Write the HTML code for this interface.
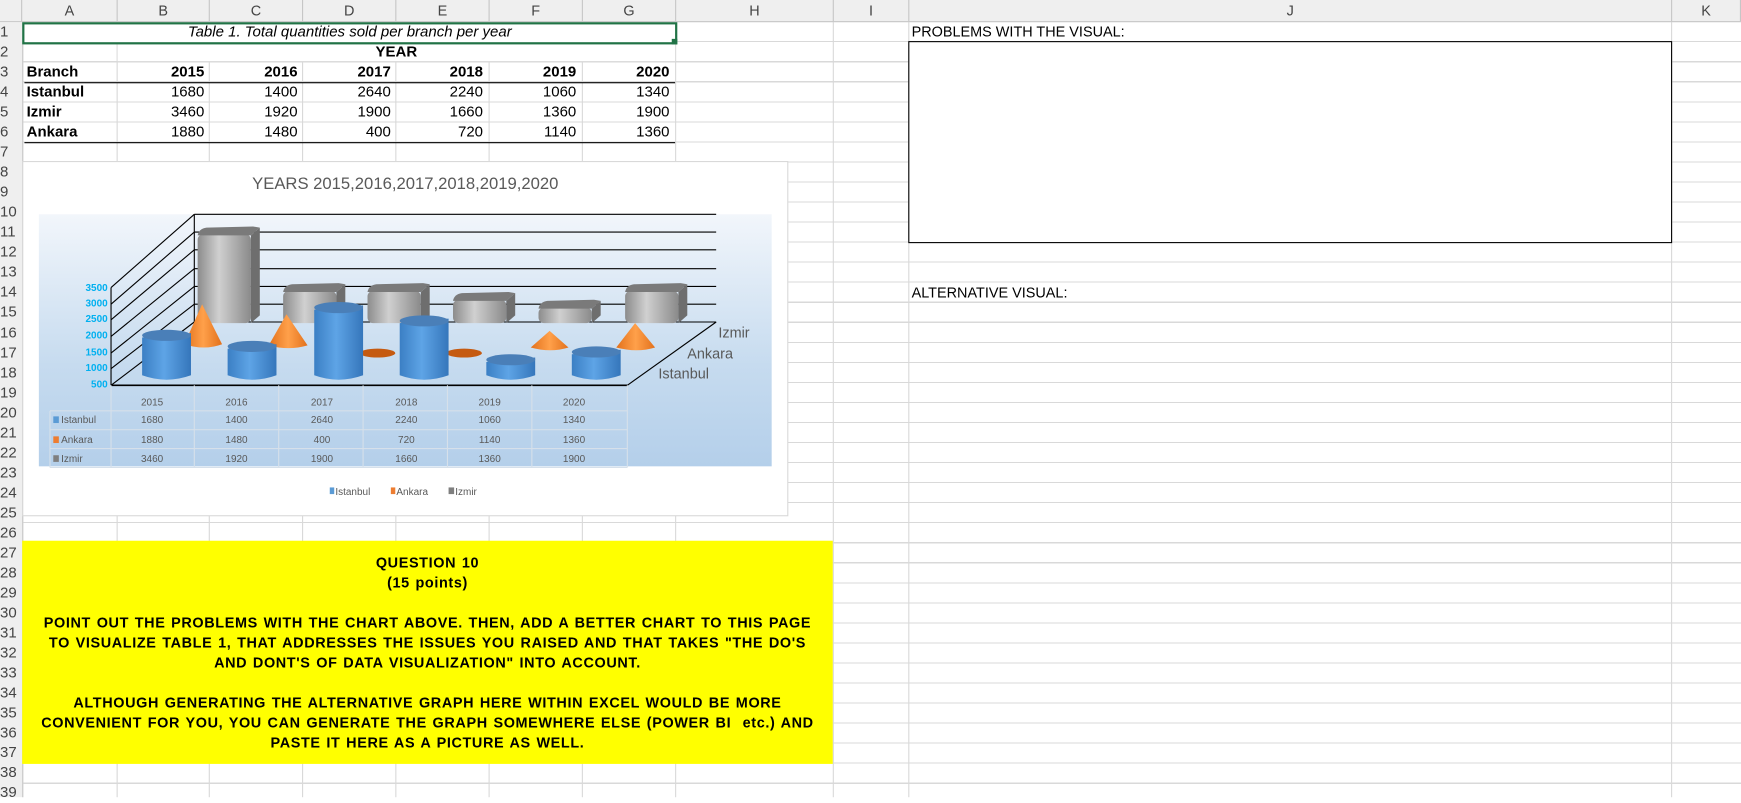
<!DOCTYPE html>
<html><head><meta charset="utf-8">
<style>
html,body{margin:0;padding:0;background:#fff;overflow:hidden;width:1741px;height:797px}
#w{position:absolute;left:0;top:0;width:1568px;height:718px;transform:scale(1.11033);transform-origin:0 0;font-family:"Liberation Sans",Arial,sans-serif;color:#000}
.a{position:absolute}
#grid{position:absolute;left:20px;top:20px;width:1548px;height:698px;
background-image:repeating-linear-gradient(to bottom,transparent 0,transparent 17.05px,#d9d9d9 17.05px,#d9d9d9 18.05px)}
.vl{position:absolute;top:0;width:1px;height:718px;background:#d9d9d9}
#hdr{position:absolute;left:0;top:0;width:1568px;height:19px;background:#efefef;border-bottom:1px solid #c6c6c6}
.ch{position:absolute;top:0;height:19px;line-height:19px;text-align:center;font-size:13px;color:#444;border-right:1px solid #c6c6c6;box-sizing:border-box}
#rn{position:absolute;left:0;top:20px;width:20px;height:698px;background:#efefef;border-right:1px solid #c6c6c6}
.r{position:absolute;left:0;width:18px;font-size:13.5px;color:#444;height:18px;line-height:18px}
.c{position:absolute;font-size:13.5px;height:18px;line-height:18px}
.num{text-align:right;width:80px}
.b{font-weight:bold}
#yel{position:absolute;left:20px;top:487px;width:730px;height:201px;background:#ffff00;text-align:center;font-weight:bold;font-size:13px;line-height:18px;letter-spacing:0.55px;word-spacing:1px;white-space:nowrap}
</style></head><body><div id="w">
<div id="grid"></div>
<div class="vl" style="left:105px"></div><div class="vl" style="left:188px"></div><div class="vl" style="left:272px"></div><div class="vl" style="left:356px"></div><div class="vl" style="left:440px"></div><div class="vl" style="left:524px"></div><div class="vl" style="left:608px"></div><div class="vl" style="left:750px"></div><div class="vl" style="left:818px"></div><div class="vl" style="left:1505px"></div>
<div id="hdr">
<div class="ch" style="left:0;width:20px;background:#efefef"></div>
<div class="ch" style="left:20px;width:86px">A</div><div class="ch" style="left:106px;width:83px">B</div><div class="ch" style="left:189px;width:84px">C</div><div class="ch" style="left:273px;width:84px">D</div><div class="ch" style="left:357px;width:84px">E</div><div class="ch" style="left:441px;width:84px">F</div><div class="ch" style="left:525px;width:84px">G</div><div class="ch" style="left:609px;width:142px">H</div><div class="ch" style="left:751px;width:68px">I</div><div class="ch" style="left:819px;width:687px">J</div><div class="ch" style="left:1506px;width:62px">K</div>
</div>
<div id="rn">
<div class="r" style="top:0">1</div><div class="r" style="top:18px">2</div><div class="r" style="top:36px">3</div><div class="r" style="top:54px">4</div><div class="r" style="top:72px">5</div><div class="r" style="top:90px">6</div><div class="r" style="top:108px">7</div><div class="r" style="top:126px">8</div><div class="r" style="top:144px">9</div><div class="r" style="top:162px">10</div><div class="r" style="top:180px">11</div><div class="r" style="top:198px">12</div><div class="r" style="top:216px">13</div><div class="r" style="top:234px">14</div><div class="r" style="top:252px">15</div><div class="r" style="top:271px">16</div><div class="r" style="top:289px">17</div><div class="r" style="top:307px">18</div><div class="r" style="top:325px">19</div><div class="r" style="top:343px">20</div><div class="r" style="top:361px">21</div><div class="r" style="top:379px">22</div><div class="r" style="top:397px">23</div><div class="r" style="top:415px">24</div><div class="r" style="top:433px">25</div><div class="r" style="top:451px">26</div><div class="r" style="top:469px">27</div><div class="r" style="top:487px">28</div><div class="r" style="top:505px">29</div><div class="r" style="top:523px">30</div><div class="r" style="top:541px">31</div><div class="r" style="top:559px">32</div><div class="r" style="top:577px">33</div><div class="r" style="top:595px">34</div><div class="r" style="top:613px">35</div><div class="r" style="top:631px">36</div><div class="r" style="top:649px">37</div><div class="r" style="top:667px">38</div><div class="r" style="top:685px">39</div>
</div>
<div class="a" style="left:106px;top:39px;width:502px;height:16px;background:#fff"></div>
<div class="a" style="left:20px;top:20px;width:586px;height:16px;border:2px solid #217346;background:#fff"></div>
<div class="a" style="left:605px;top:35px;width:5px;height:5px;background:#217346"></div>
<div class="c" style="left:20px;top:20px;width:590px;text-align:center;font-style:italic">Table 1. Total quantities sold per branch per year</div>
<div class="c b" style="left:106px;top:38px;width:502px;text-align:center">YEAR</div>
<div class="a" style="left:22px;top:74px;width:586px;height:1px;background:#000"></div>
<div class="a" style="left:22px;top:128px;width:586px;height:1px;background:#000"></div>
<div class="c b" style="left:24px;top:56px">Branch</div>
<div class="c b" style="left:24px;top:74px">Istanbul</div>
<div class="c b" style="left:24px;top:92px">Izmir</div>
<div class="c b" style="left:24px;top:110px">Ankara</div>
<div class="c b num" style="left:104px;top:56px">2015</div><div class="c b num" style="left:188px;top:56px">2016</div><div class="c b num" style="left:272px;top:56px">2017</div><div class="c b num" style="left:355px;top:56px">2018</div><div class="c b num" style="left:439px;top:56px">2019</div><div class="c b num" style="left:523px;top:56px">2020</div>
<div class="c num" style="left:104px;top:74px">1680</div><div class="c num" style="left:188px;top:74px">1400</div><div class="c num" style="left:272px;top:74px">2640</div><div class="c num" style="left:355px;top:74px">2240</div><div class="c num" style="left:439px;top:74px">1060</div><div class="c num" style="left:523px;top:74px">1340</div>
<div class="c num" style="left:104px;top:92px">3460</div><div class="c num" style="left:188px;top:92px">1920</div><div class="c num" style="left:272px;top:92px">1900</div><div class="c num" style="left:355px;top:92px">1660</div><div class="c num" style="left:439px;top:92px">1360</div><div class="c num" style="left:523px;top:92px">1900</div>
<div class="c num" style="left:104px;top:110px">1880</div><div class="c num" style="left:188px;top:110px">1480</div><div class="c num" style="left:272px;top:110px">400</div><div class="c num" style="left:355px;top:110px">720</div><div class="c num" style="left:439px;top:110px">1140</div><div class="c num" style="left:523px;top:110px">1360</div>
<div class="c" style="left:821px;top:20px;font-size:13px">PROBLEMS WITH THE VISUAL:</div>
<div class="a" style="left:818px;top:37px;width:686px;height:180px;border:1px solid #000;background:#fff"></div>
<div class="c" style="left:821px;top:255px;font-size:13px">ALTERNATIVE VISUAL:</div>
<svg class="a" style="left:20px;top:145px" width="691" height="321" viewBox="20 145 691 321" font-family="Liberation Sans, sans-serif">
<defs>
<linearGradient id="bg" x1="0" y1="0" x2="0" y2="1"><stop offset="0" stop-color="#f2f6fb"/><stop offset="0.6" stop-color="#c6dbef"/><stop offset="1" stop-color="#b4cfea"/></linearGradient>
<linearGradient id="gy" x1="0" y1="0" x2="1" y2="0"><stop offset="0" stop-color="#8c8c8c"/><stop offset="0.4" stop-color="#d0d0d0"/><stop offset="1" stop-color="#8a8a8a"/></linearGradient>
<linearGradient id="bl" x1="0" y1="0" x2="1" y2="0"><stop offset="0" stop-color="#3b7fc4"/><stop offset="0.45" stop-color="#5ea4e6"/><stop offset="1" stop-color="#3576bb"/></linearGradient>
<linearGradient id="or" x1="0" y1="0" x2="1" y2="0"><stop offset="0" stop-color="#e2711c"/><stop offset="0.5" stop-color="#ffa04a"/><stop offset="1" stop-color="#e2711c"/></linearGradient>
</defs>
<rect x="20.5" y="145.5" width="689" height="319" fill="#fff" stroke="#d9d9d9"/>
<text x="365" y="170" text-anchor="middle" font-size="15" fill="#595959">YEARS 2015,2016,2017,2018,2019,2020</text>
<rect x="35" y="193" width="660" height="227" fill="url(#bg)"/>
<g stroke="#000" stroke-width="1" fill="none">
<line x1="175" y1="193" x2="645" y2="193"/><line x1="175" y1="209" x2="645" y2="209"/><line x1="175" y1="225" x2="645" y2="225"/><line x1="175" y1="242" x2="645" y2="242"/><line x1="175" y1="258" x2="645" y2="258"/><line x1="175" y1="274" x2="645" y2="274"/><line x1="175" y1="290" x2="645" y2="290"/>
<line x1="100" y1="259" x2="175" y2="193"/><line x1="100" y1="274" x2="175" y2="209"/><line x1="100" y1="288" x2="175" y2="225"/><line x1="100" y1="303" x2="175" y2="242"/><line x1="100" y1="318" x2="175" y2="258"/><line x1="100" y1="332" x2="175" y2="274"/><line x1="100" y1="347" x2="175" y2="290"/>
<line x1="100" y1="259" x2="100" y2="347"/><line x1="175" y1="193" x2="175" y2="290"/>
<line x1="100" y1="347" x2="565" y2="347" stroke-width="1.5"/><line x1="565" y1="347" x2="645" y2="290"/>
</g>
<g stroke="none">
<g><rect x="178" y="211" width="48" height="80" rx="5" fill="url(#gy)"/><path d="M226 212 L234 205 L234 284 L226 291Z" fill="#6e6e6e"/><path d="M178 212 Q179 206 186 205 L228 204 L234 205 L226 212Z" fill="#7a7a7a"/></g>
<g><rect x="255" y="262" width="48" height="29" rx="5" fill="url(#gy)"/><path d="M303 263 L311 256 L311 284 L303 291Z" fill="#6e6e6e"/><path d="M255 263 Q256 257 263 256 L305 255 L311 256 L303 263Z" fill="#7a7a7a"/></g>
<g><rect x="331" y="262" width="48" height="29" rx="5" fill="url(#gy)"/><path d="M379 263 L387 256 L387 284 L379 291Z" fill="#6e6e6e"/><path d="M331 263 Q332 257 339 256 L381 255 L387 256 L379 263Z" fill="#7a7a7a"/></g>
<g><rect x="408" y="270" width="48" height="21" rx="5" fill="url(#gy)"/><path d="M456 271 L464 264 L464 284 L456 291Z" fill="#6e6e6e"/><path d="M408 271 Q409 265 416 264 L458 263 L464 264 L456 271Z" fill="#7a7a7a"/></g>
<g><rect x="485" y="277" width="48" height="14" rx="5" fill="url(#gy)"/><path d="M533 278 L541 271 L541 284 L533 291Z" fill="#6e6e6e"/><path d="M485 278 Q486 272 493 271 L535 270 L541 271 L533 278Z" fill="#7a7a7a"/></g>
<g><rect x="563" y="262" width="48" height="29" rx="5" fill="url(#gy)"/><path d="M611 263 L619 256 L619 284 L611 291Z" fill="#6e6e6e"/><path d="M563 263 Q564 257 571 256 L613 255 L619 256 L611 263Z" fill="#7a7a7a"/></g>
</g>
<g fill="url(#or)">
<path d="M182 274 L200 310 Q184 316 166 310Z"/>
<path d="M258 283 L277 311 Q260 316 242 311Z"/>
<ellipse cx="340" cy="318" rx="16" ry="4" fill="#c55a11"/>
<ellipse cx="418" cy="318" rx="16" ry="4" fill="#c55a11"/>
<path d="M495 298 L512 313 Q496 318 478 313Z"/>
<path d="M572 291 L590 313 Q574 318 555 313Z"/>
</g>
<g>
<path d="M128 304 L128 338 Q150 346 172 338 L172 300Z" fill="url(#bl)"/><ellipse cx="150" cy="302" rx="22" ry="5" fill="#4a7fb8"/>
<path d="M205 314 L205 338 Q227 346 249 338 L249 310Z" fill="url(#bl)"/><ellipse cx="227" cy="312" rx="22" ry="5" fill="#4a7fb8"/>
<path d="M283 279 L283 338 Q305 346 327 338 L327 275Z" fill="url(#bl)"/><ellipse cx="305" cy="277" rx="22" ry="5" fill="#4a7fb8"/>
<path d="M360 291 L360 338 Q382 346 404 338 L404 287Z" fill="url(#bl)"/><ellipse cx="382" cy="289" rx="22" ry="5" fill="#4a7fb8"/>
<path d="M438 326 L438 338 Q460 346 482 338 L482 322Z" fill="url(#bl)"/><ellipse cx="460" cy="324" rx="22" ry="5" fill="#4a7fb8"/>
<path d="M515 319 L515 338 Q537 346 559 338 L559 315Z" fill="url(#bl)"/><ellipse cx="537" cy="317" rx="22" ry="5" fill="#4a7fb8"/>
</g>
<g font-size="13" fill="#595959"><text x="647" y="304">Izmir</text><text x="619" y="323">Ankara</text><text x="593" y="341">Istanbul</text></g>
<g font-size="9" font-weight="bold" fill="#00b0f0" text-anchor="end"><text x="97" y="262">3500</text><text x="97" y="276">3000</text><text x="97" y="290">2500</text><text x="97" y="305">2000</text><text x="97" y="320">1500</text><text x="97" y="334">1000</text><text x="97" y="349">500</text></g>
<g stroke="#d6e0ea" stroke-width="1"><line x1="45" y1="370" x2="565" y2="370"/><line x1="45" y1="387" x2="565" y2="387"/><line x1="45" y1="404" x2="565" y2="404"/><line x1="45" y1="421" x2="565" y2="421"/>
<line x1="45" y1="370" x2="45" y2="421"/><line x1="100" y1="347" x2="100" y2="421"/><line x1="175" y1="347" x2="175" y2="421"/><line x1="251" y1="347" x2="251" y2="421"/><line x1="327" y1="347" x2="327" y2="421"/><line x1="403" y1="347" x2="403" y2="421"/><line x1="479" y1="347" x2="479" y2="421"/><line x1="565" y1="347" x2="565" y2="421"/></g>
<g font-size="9" fill="#595959" text-anchor="middle">
<text x="137" y="365">2015</text><text x="213" y="365">2016</text><text x="290" y="365">2017</text><text x="366" y="365">2018</text><text x="441" y="365">2019</text><text x="517" y="365">2020</text>
<text x="137" y="381">1680</text><text x="213" y="381">1400</text><text x="290" y="381">2640</text><text x="366" y="381">2240</text><text x="441" y="381">1060</text><text x="517" y="381">1340</text>
<text x="137" y="399">1880</text><text x="213" y="399">1480</text><text x="290" y="399">400</text><text x="366" y="399">720</text><text x="441" y="399">1140</text><text x="517" y="399">1360</text>
<text x="137" y="416">3460</text><text x="213" y="416">1920</text><text x="290" y="416">1900</text><text x="366" y="416">1660</text><text x="441" y="416">1360</text><text x="517" y="416">1900</text>
</g>
<g font-size="9" fill="#595959"><rect x="48" y="375" width="5" height="6" fill="#5b9bd5"/><text x="55" y="381">Istanbul</text>
<rect x="48" y="393" width="5" height="6" fill="#ed7d31"/><text x="55" y="399">Ankara</text>
<rect x="48" y="410" width="5" height="6" fill="#7f7f7f"/><text x="55" y="416">Izmir</text>
<rect x="297" y="439" width="4" height="6" fill="#5b9bd5"/><text x="302" y="446">Istanbul</text>
<rect x="352" y="439" width="4" height="6" fill="#ed7d31"/><text x="357" y="446">Ankara</text>
<rect x="404" y="439" width="5" height="6" fill="#7f7f7f"/><text x="410" y="446">Izmir</text></g>
</svg>
<div id="yel">
<div style="margin-top:11px">QUESTION 10</div>
<div>(15 points)</div>
<div>&nbsp;</div>
<div>POINT OUT THE PROBLEMS WITH THE CHART ABOVE. THEN, ADD A BETTER CHART TO THIS PAGE</div>
<div>TO VISUALIZE TABLE 1, THAT ADDRESSES THE ISSUES YOU RAISED AND THAT TAKES "THE DO'S</div>
<div>AND DONT'S OF DATA VISUALIZATION" INTO ACCOUNT.</div>
<div>&nbsp;</div>
<div>ALTHOUGH GENERATING THE ALTERNATIVE GRAPH HERE WITHIN EXCEL WOULD BE MORE</div>
<div>CONVENIENT FOR YOU, YOU CAN GENERATE THE GRAPH SOMEWHERE ELSE (POWER BI &nbsp;etc.) AND</div>
<div>PASTE IT HERE AS A PICTURE AS WELL.</div>
</div>
</div></body></html>
